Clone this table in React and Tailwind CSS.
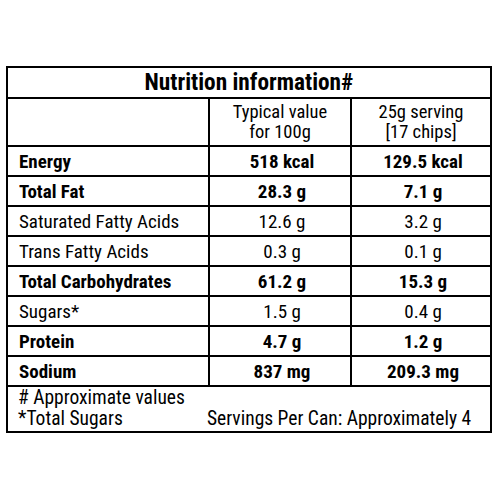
const rows = [
  { label: "Energy", a: "518 kcal", b: "129.5 kcal", bold: true },
  { label: "Total Fat", a: "28.3 g", b: "7.1 g", bold: true },
  { label: "Saturated Fatty Acids", a: "12.6 g", b: "3.2 g" },
  { label: "Trans Fatty Acids", a: "0.3 g", b: "0.1 g" },
  { label: "Total Carbohydrates", a: "61.2 g", b: "15.3 g", bold: true },
  { label: "Sugars*", a: "1.5 g", b: "0.4 g" },
  { label: "Protein", a: "4.7 g", b: "1.2 g", bold: true },
  { label: "Sodium", a: "837 mg", b: "209.3 mg", bold: true },
];

const App = () => {
  return (
    <div className="h-[500px] w-[500px] bg-white pt-[66px] pl-[6px] font-['Roboto',sans-serif] font-stretch-condensed text-black">
      <div className="w-[486px] border-2 border-black">
        <div className="flex h-[29px] items-center justify-center text-[23.3px] font-bold leading-none">
          Nutrition information#
        </div>

        <div className="grid h-[48px] grid-cols-[200px_142px_140px] border-t-2 border-black text-[18.5px] leading-[20px]">
          <div />
          <div className="flex flex-col items-center justify-center border-l-2 border-black">
            <span>Typical value</span>
            <span>for 100g</span>
          </div>
          <div className="flex flex-col items-center justify-center border-l-2 border-black">
            <span>25g serving</span>
            <span>[17 chips]</span>
          </div>
        </div>

        {rows.map((row) => (
          <div
            key={row.label}
            className={`grid h-[30px] grid-cols-[200px_142px_140px] border-t-2 border-black text-[19px] leading-none ${row.bold ? "font-bold" : ""}`}
          >
            <div className="flex items-center pl-[11px]">{row.label}</div>
            <div className="flex items-center justify-center border-l-2 border-black pl-1">
              {row.a}
            </div>
            <div className="flex items-center justify-center border-l-2 border-black pl-1">
              {row.b}
            </div>
          </div>
        ))}

        <div className="h-[46px] border-t-2 border-black pl-[10px] text-[19.5px] leading-[21px]">
          <div># Approximate values</div>
          <div className="flex">
            <span className="w-[189px]">*Total Sugars</span>
            <span>Servings Per Can: Approximately 4</span>
          </div>
        </div>
      </div>
    </div>
  );
};

export default App;
